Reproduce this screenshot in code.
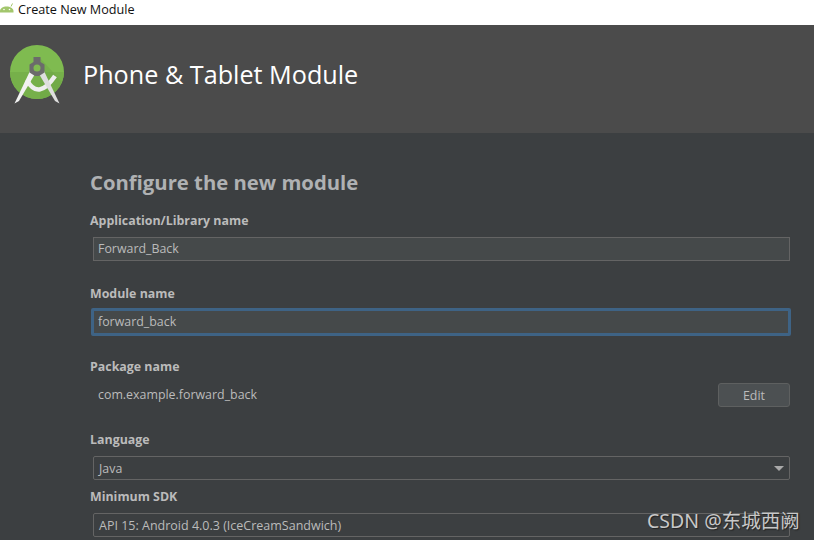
<script>
</script>

<div class="win">
  <div class="titlebar">
    <svg class="droid" width="14" height="10" viewBox="0 0 14 10"><path d="M0 9.500V8C0 5.500 3 3.500 6.500 3.500s7 2 7 4.500v1.500z" fill="#a2c66c"/><path d="M11 3.500 12.500 0.500" stroke="#a2c66c" stroke-width="1"/><circle cx="4" cy="6.500" r=".8" fill="#fff"/><circle cx="9.500" cy="6.500" r=".8" fill="#fff"/></svg>
    <span>Create New Module</span>
  </div>
  <header class="banner">
    <svg class="logo" width="54" height="60" viewBox="0 0 54 60">
      <circle cx="27" cy="27" r="27" fill="#7fbb50"/>
      <path d="M0 27a27 27 0 0 0 54 0z" fill="#76b04a"/>
      <path d="M30 13 52 37A27 27 0 0 1 30 54z" fill="#6ca344" opacity=".4"/>
      <path d="M17 35Q28 56 45 31" fill="none" stroke="#eeeeee" stroke-width="4.500"/>
      <path d="M20 26 4.500 58.500 9 56 25 29z" fill="#f2f2f2"/>
      <path d="M34 26 49.500 58.500 45 56 29 29z" fill="#dedede"/>
      <path d="M23.500 12h7v5l4 2.500v8L29 31h-4l-5.500-3.500v-8l4-2.500z" fill="#6b6b6b"/>
      <circle cx="27" cy="23" r="3.500" fill="#7fbb50"/>
    </svg>
    <h1>Phone &amp; Tablet Module</h1>
  </header>
  <main class="form">
    <h2>Configure the new module</h2>
    <label class="l1">Application/Library name</label>
    <div class="field f1">Forward_Back</div>
    <label class="l2">Module name</label>
    <div class="field focus">forward_back</div>
    <label class="l3">Package name</label>
    <div class="pkg"><span>com.example.forward_back</span><button>Edit</button></div>
    <label class="l4">Language</label>
    <div class="field select java">Java<i class="arrow"></i></div>
    <label class="l5">Minimum SDK</label>
    <div class="field select sdk">API 15: Android 4.0.3 (IceCreamSandwich)</div>
  </main>
  <div class="mark">CSDN @东城西阙</div>
</div>

<style>
  :global(body) { margin: 0; }
  .win { position: relative; width: 814px; height: 540px; overflow: hidden; background: #3c3f41; font-family: "Open Sans", "Noto Sans", sans-serif; }
  .titlebar { height: 25px; background: #fff; display: flex; align-items: flex-start; gap: 4px; font-size: 12.65px; color: #111; line-height: 19px; box-sizing: border-box; }
  .droid { margin-top: 3px; }
  .banner { height: 108px; background: #4b4b4b; display: flex; align-items: flex-start; box-sizing: border-box; padding: 20px 0 0 10px; gap: 19px; }
  .logo { flex: none; }
  h1 { margin: 12px 0 0; font-size: 25.2px; line-height: 34px; font-weight: 400; color: #fff; }
  .form { padding: 0 24px 0 90px; display: flex; flex-direction: column; color: #bbb; }
  h2 { margin: 36px 0 0; font-size: 20.3px; line-height: 26px; font-weight: 700; color: #afb1b3; }
  label { display: block; font-size: 12.4px; line-height: 16px; font-weight: 700; color: #bbb; }
  .l1 { margin-top: 18px; }
  .l2 { margin-top: 25px; }
  .l3 { margin-top: 23px; }
  .l4 { margin-top: 25px; }
  .l5 { margin-top: 9px; }
  .field { margin: 9px 0 0 3px; height: 24px; box-sizing: border-box; border: 1px solid #646464; background: #45494a; font-size: 12.4px; line-height: 22px; padding-left: 4px; color: #bbb; position: relative; }
  .f1 { margin-top: 8px; }
  .focus { height: 28px; margin: 6px -1px 0 1px; padding-left: 4px; border: 3px solid #3e6385; border-radius: 2px; line-height: 22px; }
  .select { background: #3c3f41; border-radius: 2px; padding-left: 5px; line-height: 24px; }
  .java { margin-top: 8px; }
  .sdk { margin-top: 8px; font-size: 12.5px; }
  .pkg { display: flex; align-items: center; justify-content: space-between; margin: 8px 0 0 8px; height: 24px; font-size: 12.4px; color: #bbb; }
  .pkg span { margin-top: -2px; }
  button { width: 72px; height: 24px; box-sizing: border-box; border: 1px solid #5e6060; border-radius: 3px; background: #4c5052; color: #bbb; font: inherit; font-size: 12.4px; padding: 0; }
  .arrow { position: absolute; right: 5px; top: 9px; width: 0; height: 0; border-left: 5px solid transparent; border-right: 5px solid transparent; border-top: 5px solid #a9a9a9; }
  .mark { position: absolute; left: 647px; top: 508px; font-size: 19.5px; line-height: 26px; color: #c8c8c8; font-family: "Noto Sans", "Noto Sans CJK SC", sans-serif; text-shadow: 1px 1px 1px #222; white-space: nowrap; }
</style>
